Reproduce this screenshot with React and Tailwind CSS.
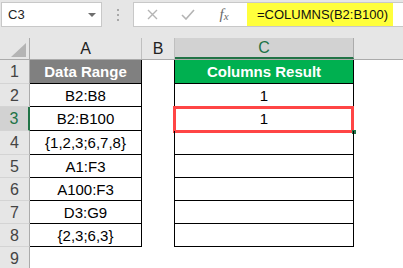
import React from "react";

const rows = [
  { n: 1, h: "h-[24px]", a: "Data Range", c: "Columns Result", head: true },
  { n: 2, h: "h-[23px]", a: "B2:B8", c: "1" },
  { n: 3, h: "h-[24px]", a: "B2:B100", c: "1", sel: true },
  { n: 4, h: "h-[24px]", a: "{1,2,3;6,7,8}", c: "" },
  { n: 5, h: "h-[23px]", a: "A1:F3", c: "" },
  { n: 6, h: "h-[23px]", a: "A100:F3", c: "" },
  { n: 7, h: "h-[23px]", a: "D3:G9", c: "" },
  { n: 8, h: "h-[23px]", a: "{2,3;6,3}", c: "" },
];

function RowHead({ n, sel, h }) {
  return (
    <div
      className={`${h} w-[30px] shrink-0 flex items-center justify-center pt-[1px] text-[16px] border-b border-[#d4d4d4] ${
        sel
          ? "bg-[#d2d2d2] text-[#217346] border-r-2 border-r-[#217346]"
          : "bg-[#e6e6e6] text-[#444] border-r border-r-[#ababab]"
      }`}
    >
      {n}
    </div>
  );
}

export default function App() {
  return (
    <div
      className="w-[403px] h-[268px] overflow-hidden bg-[#e6e6e6] flex flex-col"
      style={{ fontFamily: '"Liberation Sans", Arial, sans-serif' }}
    >
      {/* formula bar */}
      <div className="h-[28px] shrink-0 flex items-start pt-[2px]">
        <div className="ml-[1px] w-[101px] h-[25px] bg-white border border-[#c8c8c8] relative flex items-center pl-[6px] text-[13px] text-[#222]">
          C3
          <span className="absolute right-[5px] top-[10px] w-0 h-0 border-l-[4px] border-r-[4px] border-t-[4px] border-l-transparent border-r-transparent border-t-[#6e6e6e]" />
        </div>
        <div className="w-[31px] h-[25px] flex flex-col items-center justify-center gap-[3px]">
          <span className="w-[2px] h-[2px] bg-[#a8a8a8]" />
          <span className="w-[2px] h-[2px] bg-[#a8a8a8]" />
          <span className="w-[2px] h-[2px] bg-[#a8a8a8]" />
        </div>
        <div className="flex-1 h-[25px] bg-white border border-[#c8c8c8] border-r-0 flex items-stretch">
          <div className="w-[36px] flex items-center justify-center">
            <svg width="11" height="11" viewBox="0 0 11 11">
              <path d="M1 1 L10 10 M10 1 L1 10" stroke="#b4b4b4" strokeWidth="1.4" fill="none" />
            </svg>
          </div>
          <div className="w-[36px] flex items-center justify-center">
            <svg width="14" height="11" viewBox="0 0 14 11">
              <path d="M1 6 L5 10 L13 1" stroke="#b4b4b4" strokeWidth="1.6" fill="none" />
            </svg>
          </div>
          <div
            className="w-[36px] flex items-center justify-center text-[#6a6a6a] italic"
            style={{ fontFamily: '"Liberation Serif", "Times New Roman", serif' }}
          >
            <span className="text-[15px]">f</span>
            <span className="text-[11px] mt-[4px]">x</span>
          </div>
          <div className="w-[5px]" />
          <div className="w-[146px] bg-[#ffff3c] flex items-center pl-[10px] text-[13px] text-[#111] whitespace-nowrap">
            =COLUMNS(B2:B100)
          </div>
          <div className="flex-1 bg-white" />
        </div>
      </div>

      <div className="h-[10px] shrink-0" />

      {/* column headers */}
      <div className="h-[22px] shrink-0 flex border-b border-[#ababab] text-[16px] text-[#222]">
        <div className="w-[30px] shrink-0 border-r border-[#ababab] flex items-end justify-end pr-[3px] pb-[2px]">
          <svg width="15" height="14" viewBox="0 0 15 14">
            <polygon points="15,0 15,14 0,14" fill="#b4b4b4" />
          </svg>
        </div>
        <div className="w-[112px] shrink-0 border-r border-[#bfbfbf] flex items-center justify-center">A</div>
        <div className="w-[33px] shrink-0 border-r border-[#bfbfbf] flex items-center justify-center">B</div>
        <div className="w-[179px] shrink-0 bg-[#d2d2d2] border-r border-[#ababab] border-b-2 border-b-[#217346] flex items-center justify-center text-[#217346]">
          C
        </div>
        <div className="flex-1" />
      </div>

      {/* rows */}
      {rows.map((r) => (
        <div key={r.n} className="flex shrink-0 bg-white">
          <RowHead n={r.n} sel={r.sel} h={r.h} />
          <div
            className={`${r.h} w-[112px] shrink-0 border-r border-b border-black flex items-center justify-center pt-[2px] text-[15px] ${
              r.head ? "bg-[#808080] text-white font-bold" : "text-black"
            }`}
          >
            {r.a}
          </div>
          <div className={`${r.h} w-[32px] shrink-0`} />
          <div
            className={`${r.h} w-[180px] shrink-0 border-l border-r border-b border-black flex items-center justify-center pt-[2px] text-[15px] relative ${
              r.head ? "bg-[#00b050] text-white font-bold" : "text-black"
            }`}
          >
            {r.c}
            {r.sel && (
              <>
                <span className="absolute left-[-2px] right-[-1px] top-[-1px] bottom-[-3px] border-[3px] border-[#ff4545]" />
                <span className="absolute right-[-3px] bottom-[-4px] w-[4px] h-[4px] bg-[#217346]" />
              </>
            )}
          </div>
          <div className={`${r.h} flex-1`} />
        </div>
      ))}
      <div className="flex shrink-0 bg-white">
        <RowHead n={9} h="h-[23px]" />
        <div className="flex-1 h-[23px]" />
      </div>
    </div>
  );
}
